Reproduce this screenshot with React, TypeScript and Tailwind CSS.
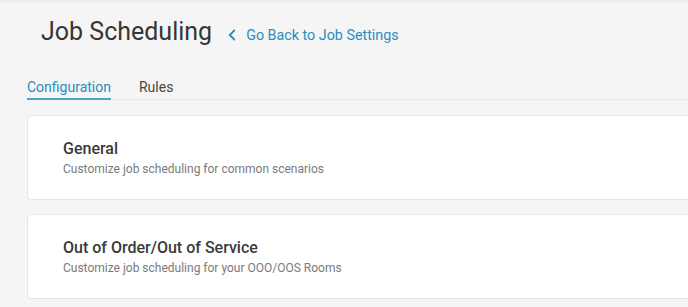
import React from "react";
import { ChevronLeft } from "lucide-react";

export default function App() {
  return (
    <div
      className="w-[688px] h-[307px] overflow-hidden bg-[#f5f5f5] relative"
      style={{ fontFamily: "Roboto, 'Liberation Sans', sans-serif" }}
    >
      <div className="absolute top-0 left-0 right-0 h-[4px] bg-gradient-to-b from-[#e9e9e9] to-transparent" />
      <div className="flex items-start pt-[16px] pl-[41px]">
        <h1 className="text-[25px] leading-[32px] font-normal text-[#363636]">
          Job Scheduling
        </h1>
        <a className="flex items-center ml-[11px] mt-[9px] text-[14.3px] leading-[20px] text-[#2b8dbd]">
          <ChevronLeft size={18} strokeWidth={2.4} className="mr-[5px]" />
          Go Back to Job Settings
        </a>
      </div>
      <div className="flex ml-[27px] mt-[29px] border-b border-[#ebebeb] gap-[28px]">
        <div className="text-[14px] leading-[20px] text-[#2b8dbd] border-b-2 border-[#4aa3cc] pb-[1px] -mb-px">
          Configuration
        </div>
        <div className="text-[14px] leading-[20px] text-[#454545]">Rules</div>
      </div>
      <div className="pl-[27px] mt-[15px] flex flex-col gap-[14px]">
        <div className="w-[720px] bg-white border border-[#e6e6e6] rounded-[4px] pl-[35px] pt-[23px] pb-[21px]">
          <div className="text-[16px] leading-[20px] font-medium text-[#3a3a3a]">General</div>
          <div className="text-[12px] leading-[18px] text-[#7a7a7a] mt-[1px]">
            Customize job scheduling for common scenarios
          </div>
        </div>
        <div className="w-[720px] bg-white border border-[#e6e6e6] rounded-[4px] pl-[35px] pt-[23px] pb-[21px]">
          <div className="text-[16px] leading-[20px] font-medium text-[#3a3a3a]">
            Out of Order/Out of Service
          </div>
          <div className="text-[12px] leading-[18px] text-[#7a7a7a] mt-[1px]">
            Customize job scheduling for your OOO/OOS Rooms
          </div>
        </div>
      </div>
    </div>
  );
}
